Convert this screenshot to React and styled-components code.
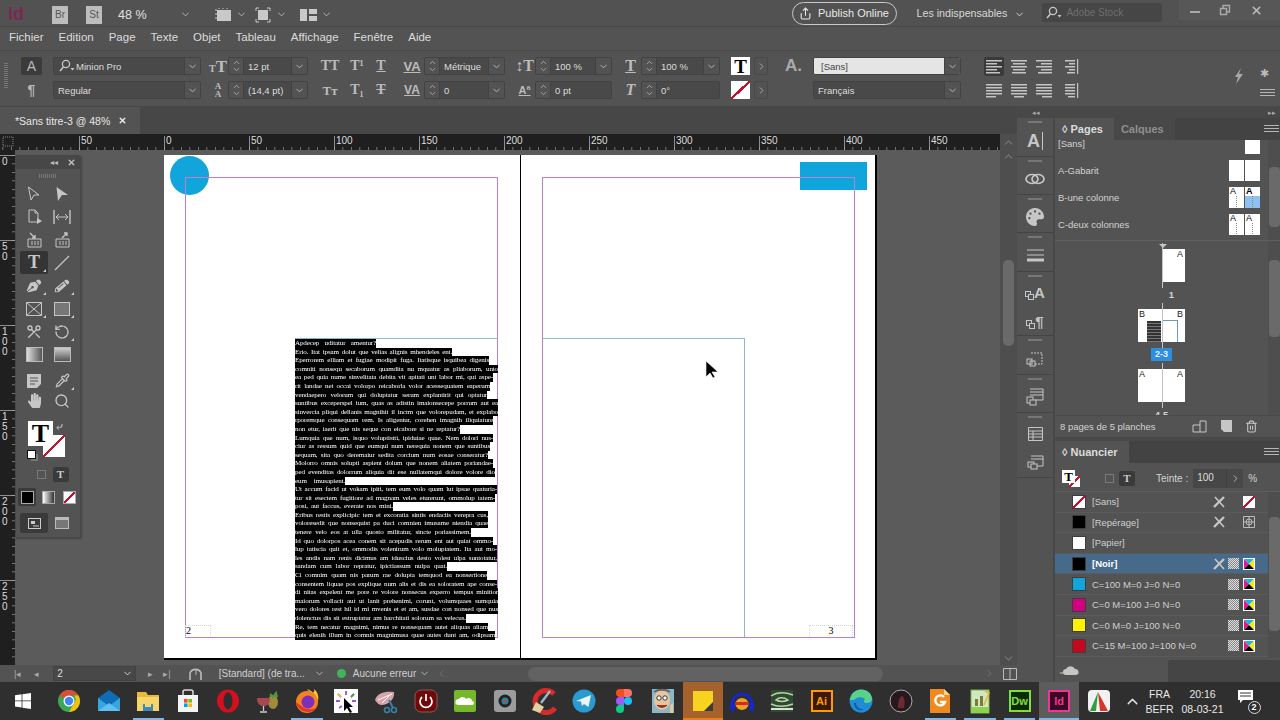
import styled, { createGlobalStyle } from "styled-components";
import { ChevronDown, ChevronRight, ChevronUp, Pipette, RotateCcw, Scissors, Search, Share, Trash2, X } from "lucide-react";
import { FaHandPaper, FaPalette, FaPencilAlt, FaPenNib } from "react-icons/fa";

const TEXT_LINES = [
    ["Apdecep uditatur amentur?", 81],
    ["Erio. Itat ipsam dolut que velias alignis mhendeles ent.", 157],
    ["Eperrorem elliam et fugiae modipit fuga. Itatisque isquibea digenis", 194],
    ["comniti nonsequ secaborum quamdita nu mquatur as pliaborum, unto", 203],
    ["ea ped quia nume sinvelitata debita vit apitati unt labor mi, qui aspe-", 198],
    ["rit landae net occai volorpo reicaborla volor acessequatem eaperum", 195],
    ["vendaepero velorum qui doluptatur serum explantirit qui optatur", 192],
    ["suntibus exceperspel ium, quas as adistin imaionsecepe porrum aut ea", 203],
    ["sinvercia pliqui dellanis magnihit il inctm que volorepudam, et explabo", 203],
    ["rporemque consequam rem. Is aligentur, corehen imagnih iliquiature", 198],
    ["non etur, iaerit que nis seque con eicabore si ne reptatur?", 165],
    ["Lumquia que num, isquo voluptistti, ipiduiae quae. Nem dolori nus-", 198],
    ["ciur as ressum quid que eumqui num nerequia nonem que suntibus", 195],
    ["sequam, sita quo deremaiur sedita corcium num eosae conseratur?", 193],
    ["Molorro omnis solupti aspient dolum que nonem aliatem poriandae-", 198],
    ["ped evenditas dolorrum aliquia dit ese nullatemqui dolore volore dio", 200],
    ["eum imusapient.", 50],
    ["Ut accum facid ut vokam ipiti, tem eum volo quam lut ipsae quaturia-", 202],
    ["tur sit esectem fugitiore ad magnam veles eturerunt, ommolup tatem-", 200],
    ["posi, aut faccus, everate nos mini.", 98],
    ["Eribus restis explicipic tem et excoratia sintis endaciis verepra cus,", 193],
    ["voloresedit que nonsequist pa duci comnien imusame niendia quae", 193],
    ["tenere velo eos at ulla quosto militatur, sincte poriassimem.", 176],
    ["Id quo dolorpos acea conem sit acepudis rerum ent aut quiat ommo-", 198],
    ["lup tatiscia quit et, ommodis volenirum volo moluptatem. Ita aut mo-", 202],
    ["les andis nam renis dicimus am iduscius desto volest ulpa suntotatur,", 202],
    ["sandam cum labor repratur, ipictiassum nulpa quat.", 152],
    ["Ci comnim quam nis parum rae dolupta temquod ea nonsertione", 192],
    ["consentem liquae pos explique num alis et dis ea soloratem ape conse-", 202],
    ["di nitas expelent me pore re volore nonsecus experro tempus minitior", 203],
    ["maiorum vollacit aut ut lanit prehenimi, corunt, volumquaes sumquia", 203],
    ["vero dolores rest hil id mi mvenis et et am, susdae con nonsed que nus", 203],
    ["dolenctus dis sit estruptatur am harchitati solorum sa velecus.", 171],
    ["Re, tem necatur magnimi, nimus re nonsequam autet aliquas aliam", 193],
    ["quis elenih illum in comnis magnimusa quae autes dunt am, odipsam", 200],
];

const MENU = ["Fichier", "Edition", "Page", "Texte", "Objet", "Tableau", "Affichage", "Fenêtre", "Aide"];

const SWATCHES = [
    { name: "[Sans]", none: true, pin: true, right: "none" },
    { name: "[Repérage]", color: "#000", pin: true, right: "reg" },
    { name: "[Papier]", color: "#fff" },
    { name: "[Noir]", color: "#000", pin: true, right: "cmyk", selected: true },
    { name: "C=100 M=0 J=0 N=0", color: "#12a5dc", right: "cmyk" },
    { name: "C=0 M=100 J=0 N=0", color: "#d5007f", right: "cmyk" },
    { name: "C=0 M=0 J=100 N=0", color: "#fff200", right: "cmyk" },
    { name: "C=15 M=100 J=100 N=0", color: "#c4091f", right: "cmyk" },
];

export default function App() {
    return (
        <Screen>
            <GlobalStyle />
            <TopBar />
            <MenuBar>
                {MENU.map(item => <span key={item}>{item}</span>)}
            </MenuBar>
            <ControlPanel />
            <Workspace>
                <DocColumn>
                    <TabBar>
                        <DocTab>*Sans titre-3 @ 48%<X size={9} strokeWidth={4} /></DocTab>
                    </TabBar>
                    <HorizontalRuler />
                    <CanvasRow>
                        <VerticalRuler />
                        <Canvas>
                            <Toolbox />
                            <Spread />
                        </Canvas>
                        <VScroll>
                            <ChevronUp size={13} color="#777" />
                            <VThumb />
                            <ChevronDown size={13} color="#777" />
                        </VScroll>
                    </CanvasRow>
                    <StatusBar />
                </DocColumn>
                <Dock />
                <PanelColumn>
                    <CollapseStrip>▸▸</CollapseStrip>
                    <PagesPanel />
                    <SwatchesPanel />
                </PanelColumn>
            </Workspace>
            <Taskbar />
        </Screen>
    );
}

function TopBar() {
    return (
        <TopRow>
            <IdLogo>Id</IdLogo>
            <AppChip $ml={26}>Br</AppChip>
            <AppChip $ml={18}>St</AppChip>
            <ZoomValue>48 %</ZoomValue>
            <TopChevron $ml={33} />
            <svg width="20" height="16" viewBox="0 0 20 16" style={{ marginLeft: 23 }}>
                <rect x="3" y="3" width="14" height="11" fill="#c9c9c9" />
                <path d="M1 3h2M1 7h2M1 11h2M5 1v1M9 1v1M13 1v1" stroke="#c9c9c9" />
            </svg>
            <TopChevron $ml={2} />
            <svg width="16" height="16" viewBox="0 0 16 16" style={{ marginLeft: 8 }}>
                <rect x="3" y="3" width="10" height="10" fill="#c9c9c9" />
                <path d="M1 4V1h3M12 1h3v3M1 12v3h3M15 12v3h-3" fill="none" stroke="#c9c9c9" />
            </svg>
            <TopChevron $ml={5} />
            <svg width="17" height="14" viewBox="0 0 17 14" style={{ marginLeft: 13 }}>
                <path d="M0 1h7v12H0zM9 1h8v5H9zM9 8h8v5H9z" fill="#c9c9c9" />
            </svg>
            <TopChevron $ml={4} />
            <PublishButton>
                <Share size={13} />
                Publish Online
            </PublishButton>
            <WorkspaceName>Les indispensables</WorkspaceName>
            <TopChevron $ml={7} $light />
            <StockSearch>
                <SearchGlyph />
                Adobe Stock
            </StockSearch>
            <WindowButtons>
                <svg width="12" height="12" viewBox="0 0 12 12"><rect x="1" y="7" width="10" height="2" fill="#aaa" /></svg>
                <svg width="12" height="12" viewBox="0 0 12 12"><path d="M1.5 4.5h6v6h-6zM4 4V1.5h6.5V8H8" fill="none" stroke="#aaa" strokeWidth="1.4" /></svg>
                <X size={13} color="#bbb" strokeWidth={3} />
            </WindowButtons>
        </TopRow>
    );
}

function SearchGlyph() {
    return (
        <svg width="18" height="14" viewBox="0 0 18 14">
            <circle cx="8" cy="5" r="3.6" fill="none" stroke="#c8c8c8" strokeWidth="1.3" />
            <path d="M5.4 8 2 12" stroke="#c8c8c8" strokeWidth="1.6" />
            <path d="M12.5 9h4l-2 2.4z" fill="#c8c8c8" />
        </svg>
    );
}

function Field({ width, children, chevron, stepper, light }) {
    return (
        <FieldWrap $w={width} $light={light}>
            {stepper && <Stepper><ChevronUp size={9} /><ChevronDown size={9} /></Stepper>}
            <FieldText $light={light}>{children}</FieldText>
            {chevron && <FieldChevron><ChevronDown size={11} /></FieldChevron>}
        </FieldWrap>
    );
}

function AlignIcon({ rows, last }) {
    return (
        <svg width="20" height="15" viewBox="0 0 20 15">
            {rows.map(([x, w], i) => <rect key={i} x={x} y={1 + i * 3} width={w} height="1.5" fill="#c4c4c4" />)}
            {last && <rect x="18" y="0" width="1.2" height="15" fill="#c4c4c4" />}
        </svg>
    );
}

const ALIGN_TOP = [
    { rows: [[2, 16], [2, 11], [2, 16], [2, 11], [2, 14]], active: true },
    { rows: [[2, 16], [4, 12], [2, 16], [4, 12], [3, 14]] },
    { rows: [[2, 16], [7, 11], [2, 16], [7, 11], [4, 14]] },
    { rows: [[6, 10], [10, 6], [6, 10], [10, 6], [8, 8]], last: true },
];

const ALIGN_BOTTOM = [
    { rows: [[2, 16], [2, 16], [2, 16], [2, 16], [2, 10]] },
    { rows: [[2, 16], [2, 16], [2, 16], [2, 16], [5, 10]] },
    { rows: [[2, 16], [2, 16], [2, 16], [2, 16], [8, 10]] },
    { rows: [[6, 10], [6, 10], [6, 10], [6, 10], [9, 7]], last: true },
];

function ControlPanel() {
    return (
        <ControlRow>
            <Grip />
            <Cluster $ml={13} $w={21}>
                <ModeButton $active>A</ModeButton>
                <ModeButton>¶</ModeButton>
            </Cluster>
            <Cluster $ml={11} $w={148}>
                <Field width={148} chevron><SearchGlyph />Minion Pro</Field>
                <Field width={148} chevron>Regular</Field>
            </Cluster>
            <Cluster $ml={7} $w={100}>
                <InlineRow>
                    <GlyphIcon $size={17} $w={20}><SmallCap>T</SmallCap>T</GlyphIcon>
                    <Field width={80} stepper chevron>12 pt</Field>
                </InlineRow>
                <InlineRow>
                    <GlyphIcon $size={9} $w={20} $stack>A<br />A</GlyphIcon>
                    <Field width={80} stepper chevron>(14,4 pt)</Field>
                </InlineRow>
            </Cluster>
            <Cluster $ml={12} $w={70}>
                <InlineRow $gap={10}>
                    <GlyphIcon $size={14} $w={20}>TT</GlyphIcon>
                    <GlyphIcon $size={14} $w={14}>T¹</GlyphIcon>
                    <GlyphIcon $size={14} $w={14} $under>T</GlyphIcon>
                </InlineRow>
                <InlineRow $gap={10}>
                    <GlyphIcon $size={13} $w={20}>Tт</GlyphIcon>
                    <GlyphIcon $size={14} $w={14}>T₁</GlyphIcon>
                    <GlyphIcon $size={14} $w={14} $strike>T</GlyphIcon>
                </InlineRow>
            </Cluster>
            <Cluster $ml={10} $w={105}>
                <InlineRow>
                    <GlyphIcon $sans $size={13} $w={24} $under>VA</GlyphIcon>
                    <Field width={81} stepper chevron>Métrique</Field>
                </InlineRow>
                <InlineRow>
                    <GlyphIcon $sans $size={12} $w={24} $under>VA</GlyphIcon>
                    <Field width={81} stepper chevron>0</Field>
                </InlineRow>
            </Cluster>
            <Cluster $ml={9} $w={98}>
                <InlineRow>
                    <GlyphIcon $size={16} $w={21}>↕T</GlyphIcon>
                    <Field width={77} stepper chevron>100 %</Field>
                </InlineRow>
                <InlineRow>
                    <GlyphIcon $sans $size={11} $w={21} $under>Aª</GlyphIcon>
                    <Field width={77} stepper>0 pt</Field>
                </InlineRow>
            </Cluster>
            <Cluster $ml={8} $w={100}>
                <InlineRow>
                    <GlyphIcon $size={16} $w={21} $under>T</GlyphIcon>
                    <Field width={79} stepper chevron>100 %</Field>
                </InlineRow>
                <InlineRow>
                    <GlyphIcon $size={16} $w={21} $italic>T</GlyphIcon>
                    <Field width={79} stepper>0°</Field>
                </InlineRow>
            </Cluster>
            <Cluster $ml={11} $w={37}>
                <InlineRow $gap={4}>
                    <ColorChip><BlackT $size={19}>T</BlackT></ColorChip>
                    <ArrowChip><ChevronRight size={11} /></ArrowChip>
                </InlineRow>
                <InlineRow $gap={4}>
                    <ColorChip><NoneSlash /></ColorChip>
                    <ArrowChip><ChevronRight size={11} /></ArrowChip>
                </InlineRow>
            </Cluster>
            <Cluster $ml={17} $w={17}>
                <StyleLetter>A.</StyleLetter>
                <span />
            </Cluster>
            <Cluster $ml={11} $w={148}>
                <Field width={148} chevron light>[Sans]</Field>
                <Field width={148} chevron>Français</Field>
            </Cluster>
            <Cluster $ml={23} $w={90}>
                <InlineRow $gap={5}>
                    {ALIGN_TOP.map((a, i) => (
                        <AlignButton key={i} $active={a.active}><AlignIcon rows={a.rows} last={a.last} /></AlignButton>
                    ))}
                </InlineRow>
                <InlineRow $gap={5}>
                    {ALIGN_BOTTOM.map((a, i) => (
                        <AlignButton key={i}><AlignIcon rows={a.rows} last={a.last} /></AlignButton>
                    ))}
                </InlineRow>
            </Cluster>
            <Bolt viewBox="0 0 12 18" width="12" height="18"><path d="M8 1 2 10h3l-2 7 7-10H6z" fill="#a8a8a8" /></Bolt>
            <PanelMenu>
                <span>✱</span>
                <MenuLines />
            </PanelMenu>
        </ControlRow>
    );
}

function MenuLines() {
    return (
        <svg width="15" height="8" viewBox="0 0 15 8">
            <path d="M0 .5h15M0 3.5h15M0 6.5h15" stroke="#b5b5b5" />
        </svg>
    );
}

function HorizontalRuler() {
    const ticks = [];
    for (let i = -19; i < 100; i++) ticks.push(164 + i * 8.5);
    const labels = [-50, 0, 50, 100, 150, 200, 250, 300, 350, 400, 450];

    return (
        <RulerRow>
            <RulerSvg width="1000" height="16" viewBox="0 0 1000 16">
                <path d="M3 3h10v9H3z" fill="none" stroke="#888" strokeDasharray="1 1" />
                {ticks.map(x => <rect key={x} x={x} y="13" width=".7" height="3" fill="#999" />)}
                {labels.map(v => {
                    const x = 164 + v * 1.7;
                    return (
                        <g key={v}>
                            <rect x={x} y="2" width=".8" height="14" fill="#aaa" />
                            <text x={x + 2} y="10" fontSize="10" fill="#ddd" fontFamily="Liberation Sans">{Math.abs(v)}</text>
                        </g>
                    );
                })}
            </RulerSvg>
            <ChevronUp size={13} color="#777" style={{ margin: "2px 2px" }} />
        </RulerRow>
    );
}

function VerticalRuler() {
    const ticks = [];
    for (let i = 0; i < 60; i++) ticks.push(5 + i * 8.5);
    const labels = [0, 50, 100, 150, 200, 250];

    return (
        <VRulerBox>
            <svg width="15" height="515" viewBox="0 0 15 515">
                {ticks.map(y => <rect key={y} x="12" y={y} width="3" height=".7" fill="#999" />)}
                {labels.map(v => {
                    const y = 5 + v * 1.7;
                    return (
                        <g key={v}>
                            <rect x="0" y={y} width="15" height=".8" fill="#aaa" />
                            {String(v).split("").map((d, i) => (
                                <text key={i} x="2" y={y + 10 + i * 10} fontSize="10" fill="#ddd" fontFamily="Liberation Sans">{d}</text>
                            ))}
                        </g>
                    );
                })}
            </svg>
        </VRulerBox>
    );
}

function Toolbox() {
    const ic = "#c6c6c6";
    return (
        <ToolboxWrap>
            <ToolHeader>
                <span>◂◂</span>
                <X size={9} strokeWidth={4} color="#bbb" />
            </ToolHeader>
            <ToolGrip />
            <ToolGrid>
                <Tool><svg width="14" height="16" viewBox="0 0 14 16"><path d="M1.5 1 12 9H7l-3 5z" fill="none" stroke={ic} /></svg></Tool>
                <Tool><svg width="14" height="16" viewBox="0 0 14 16"><path d="M1.5 1 13 9H7l-4 6z" fill={ic} /></svg></Tool>
                <Tool>
                    <svg width="15" height="16" viewBox="0 0 15 16"><path d="M2 1h6l3 3v9H2zM8 1v3h3" fill="none" stroke={ic} /><path d="M10 9l5 3-5 3z" fill={ic} /></svg>
                </Tool>
                <Tool>
                    <svg width="18" height="14" viewBox="0 0 18 14"><path d="M1 0v14M17 0v14" stroke={ic} strokeWidth="1.4" /><path d="M3 7h12M6 4 3 7l3 3M12 4l3 3-3 3" fill="none" stroke={ic} /></svg>
                </Tool>
                <Tool>
                    <svg width="15" height="16" viewBox="0 0 15 16"><path d="M1 7h13v8H1z" fill="none" stroke={ic} /><path d="M3 1l5 5M8 3v3H5" fill="none" stroke={ic} strokeWidth="1.4" /><path d="M4 10h2M7 10h2M10 10h2M4 12h2M7 12h2M10 12h2" stroke={ic} /></svg>
                </Tool>
                <Tool>
                    <svg width="15" height="16" viewBox="0 0 15 16"><path d="M1 7h13v8H1z" fill="none" stroke={ic} /><path d="M7 6l5-5M9 1h3v3" fill="none" stroke={ic} strokeWidth="1.4" /><path d="M4 10h2M7 10h2M10 10h2M4 12h2M7 12h2M10 12h2" stroke={ic} /></svg>
                </Tool>
                <Tool $active $more><TypeGlyph>T</TypeGlyph></Tool>
                <Tool><svg width="16" height="16" viewBox="0 0 16 16"><path d="M1 15 15 1" stroke={ic} strokeWidth="1.2" /></svg></Tool>
                <Tool $more><FaPenNib size={14} color={ic} style={{ transform: "rotate(5deg)" }} /></Tool>
                <Tool $more><FaPencilAlt size={14} color={ic} style={{ transform: "rotate(5deg)" }} /></Tool>
                <Tool $more><svg width="16" height="14" viewBox="0 0 16 14"><path d="M.5.5h15v13H.5zM.5.5l15 13M15.5.5l-15 13" fill="none" stroke={ic} /></svg></Tool>
                <Tool $more><svg width="16" height="14" viewBox="0 0 16 14"><rect x=".5" y=".5" width="15" height="13" fill="#777" stroke={ic} /></svg></Tool>
                <Tool><Scissors size={16} color={ic} style={{ transform: "rotate(-90deg) scaleX(-1)" }} /></Tool>
                <Tool $more><RotateCcw size={16} color={ic} strokeDasharray="6 2" /></Tool>
                <Tool><GradientBox /></Tool>
                <Tool><GradientBox $feather /></Tool>
                <Tool $gapTop>
                    <svg width="14" height="14" viewBox="0 0 14 14"><path d="M0 0h14v10l-4 4H0z" fill={ic} /><path d="M3 4h8M3 7h8M3 10h5" stroke="#555" /></svg>
                </Tool>
                <Tool $more $gapTop><Pipette size={15} color={ic} /></Tool>
                <Tool><FaHandPaper size={15} color={ic} /></Tool>
                <Tool><Search size={16} color={ic} /></Tool>
            </ToolGrid>
            <FillStroke>
                <FillBox><BlackT $size={26}>T</BlackT></FillBox>
                <StrokeBox><NoneSlash /></StrokeBox>
                <SwapArrow>⤶</SwapArrow>
                <DefaultChips />
            </FillStroke>
            <TargetRow>
                <SmallSquare />
                <TargetT>T</TargetT>
            </TargetRow>
            <ApplyRow>
                <ApplyCell $active><ApplySwatch /></ApplyCell>
                <ApplyCell><ApplySwatch $gradient /></ApplyCell>
                <ApplyCell><ApplySwatch $none><NoneSlash /></ApplySwatch></ApplyCell>
            </ApplyRow>
            <ViewRow>
                <ViewButton $active><PreviewIcon /></ViewButton>
                <ViewButton><svg width="14" height="12" viewBox="0 0 14 12"><rect x=".5" y=".5" width="13" height="11" fill="#777" stroke="#bbb" /><rect x="1" y="1" width="12" height="2" fill="#bbb" /></svg></ViewButton>
            </ViewRow>
        </ToolboxWrap>
    );
}

function PreviewIcon() {
    return (
        <svg width="13" height="11" viewBox="0 0 13 11">
            <rect x=".5" y=".5" width="12" height="10" fill="none" stroke="#ccc" />
            <rect x="3" y="3" width="4" height="3" fill="#ccc" />
            <path d="M5 8h6" stroke="#ccc" />
        </svg>
    );
}

function Spread() {
    return (
        <SpreadWrap>
            <Spine />
            <CyanCircle />
            <CyanRect />
            <MarginFrame $left={21} />
            <MarginFrame $left={378} />
            <BlueFrame />
            <TextFrame>
                {TEXT_LINES.map(([text, width], i) => (
                    <TextLine key={i} $w={width}>{text}</TextLine>
                ))}
            </TextFrame>
            <PageNumber $left={21} $w={26}>2</PageNumber>
            <PageNumber $left={645} $w={44} $center>3</PageNumber>
            <PointerArrow width="14" height="18" viewBox="0 0 14 18">
                <path d="M1 0v16l4-4 3 5 2-1-3-5h6z" fill="#000" stroke="#fff" strokeWidth=".6" />
            </PointerArrow>
        </SpreadWrap>
    );
}

function StatusBar() {
    return (
        <StatusRow>
            <NavIcon $ml={14}>|◂</NavIcon>
            <NavIcon $ml={13}>◂</NavIcon>
            <StatusField>2<ChevronDown size={11} /></StatusField>
            <NavIcon $ml={12}>▸</NavIcon>
            <NavIcon $ml={10}>▸|</NavIcon>
            <svg width="14" height="14" viewBox="0 0 14 14" style={{ marginLeft: 18 }}>
                <path d="M1 13V6a6 6 0 0 1 11 0v7" fill="none" stroke="#bbb" strokeWidth="1.6" />
                <path d="M7 3v5" stroke="#bbb" />
            </svg>
            <StatusText $ml={16}>[Standard] (de tra...</StatusText>
            <ChevronDown size={11} color="#bbb" style={{ marginLeft: 9 }} />
            <GreenDot />
            <StatusText $ml={7}>Aucune erreur</StatusText>
            <ChevronDown size={11} color="#bbb" style={{ marginLeft: 3 }} />
            <ChevronRight size={11} color="#777" style={{ marginLeft: 6, transform: "scaleX(-1)" }} />
            <HTrack><HThumb /></HTrack>
            <ChevronRight size={11} color="#777" />
            <svg width="14" height="12" viewBox="0 0 14 12" style={{ marginLeft: 8 }}>
                <path d="M.5.5h13v11H.5zM7 .5v11" fill="none" stroke="#bbb" />
            </svg>
        </StatusRow>
    );
}

function Squares() {
    return (
        <svg width="9" height="9" viewBox="0 0 9 9">
            <rect x=".5" y=".5" width="5" height="5" fill="#535353" stroke="#c6c6c6" />
            <rect x="3.5" y="3.5" width="5" height="5" fill="#535353" stroke="#c6c6c6" />
        </svg>
    );
}

function Dock() {
    const ic = "#c6c6c6";
    return (
        <DockColumn>
            <DockTop>◂◂</DockTop>
            <DockBox>
                <DockSection $h={39}><DockLetter>A<ThinBar /></DockLetter></DockSection>
                <DockSection $h={38}>
                    <svg width="20" height="12" viewBox="0 0 20 12">
                        <ellipse cx="7" cy="6" rx="6" ry="4.5" fill="none" stroke={ic} strokeWidth="1.7" />
                        <ellipse cx="13" cy="6" rx="6" ry="4.5" fill="none" stroke={ic} strokeWidth="1.7" />
                    </svg>
                </DockSection>
                <DockSection $h={38}><FaPalette size={18} color={ic} /></DockSection>
                <DockSection $h={39}>
                    <svg width="17" height="13" viewBox="0 0 17 13"><path d="M0 1h17M0 6h17" stroke={ic} /><rect y="9.5" width="17" height="3" fill={ic} /></svg>
                </DockSection>
                <DockSection $h={64} $double>
                    <DockStack><Squares /><DockLetter $small>A</DockLetter></DockStack>
                    <DockStack><Squares /><DockLetter $small>¶</DockLetter></DockStack>
                </DockSection>
                <DockSection $h={39}>
                    <svg width="18" height="17" viewBox="0 0 18 17">
                        <path d="M5 3h11v11H8" fill="none" stroke={ic} strokeDasharray="2 1" />
                        <rect x="1" y="9" width="5" height="5" fill="none" stroke={ic} />
                        <rect x="4" y="11" width="5" height="5" fill="none" stroke={ic} />
                    </svg>
                </DockSection>
                <DockSection $h={38}>
                    <svg width="18" height="18" viewBox="0 0 18 18">
                        <path d="M4 1h13v11H9M4 4h13M4 7h13" fill="none" stroke={ic} />
                        <rect x="1" y="9" width="6" height="6" fill="#535353" stroke={ic} />
                        <rect x="4" y="12" width="6" height="5" fill="#535353" stroke={ic} />
                    </svg>
                </DockSection>
                <DockSection $h={65} $double>
                    <svg width="15" height="14" viewBox="0 0 15 14"><path d="M.5.5h14v13H.5zM.5 4h14M.5 7h14M.5 10h14M5 4v10" fill="none" stroke={ic} /></svg>
                    <svg width="17" height="15" viewBox="0 0 17 15">
                        <path d="M4 1h12v10H9M4 4h12" fill="none" stroke={ic} />
                        <rect x="1" y="7" width="6" height="5" fill="#535353" stroke={ic} />
                        <rect x="4" y="9" width="6" height="5" fill="#535353" stroke={ic} />
                    </svg>
                </DockSection>
            </DockBox>
        </DockColumn>
    );
}

function MasterThumb({ letters, hilite, dots, blank }) {
    return (
        <ThumbPair>
            {[0, 1].map(i => (
                <ThumbPage key={i} $hilite={hilite && i === 1} $blank={blank && i === 0}>
                    {letters && <ThumbLetter $bold={hilite && i === 1}>{letters}</ThumbLetter>}
                    {dots && <ThumbDots />}
                </ThumbPage>
            ))}
        </ThumbPair>
    );
}

function PagesPanel() {
    return (
        <PanelBox $h={319}>
            <PanelTabs>
                <PanelTab $active>◊&nbsp;Pages</PanelTab>
                <PanelTab>Calques</PanelTab>
                <TabMenu><MenuLines /></TabMenu>
            </PanelTabs>
            <MasterList>
                <MasterRows>
                    <MasterRow><span>[Sans]</span><MasterThumb blank /></MasterRow>
                    <MasterRow><span>A-Gabarit</span><MasterThumb /></MasterRow>
                    <MasterRow><span>B-une colonne</span><MasterThumb letters="A" hilite dots /></MasterRow>
                    <MasterRow><span>C-deux colonnes</span><MasterThumb letters="A" dots /></MasterRow>
                </MasterRows>
                <PanelScroll><PanelThumb $top={27} $h={60} /></PanelScroll>
            </MasterList>
            <PageArea>
                <PageStrip>
                    <SpreadRow>
                        <PageMarker />
                        <PageSlot $empty />
                        <PageSlot><CornerLetter $right>A</CornerLetter></PageSlot>
                    </SpreadRow>
                    <PageLabel $shift={20}>1</PageLabel>
                    <SpreadRow>
                        <PageSlot>
                            <CornerLetter>B</CornerLetter>
                            <MiniText />
                        </PageSlot>
                        <PageSlot>
                            <CornerLetter $right>B</CornerLetter>
                            <MiniFrame />
                        </PageSlot>
                    </SpreadRow>
                    <PageLabel><PageBadge>2-3</PageBadge></PageLabel>
                    <SpreadRow>
                        <PageSlot><CornerLetter>A</CornerLetter></PageSlot>
                        <PageSlot><CornerLetter $right>A</CornerLetter></PageSlot>
                    </SpreadRow>
                    <PageLabel>4-5</PageLabel>
                </PageStrip>
                <PanelScroll><PanelThumb $top={19} $h={77} /></PanelScroll>
            </PageArea>
            <PanelFooter>
                8 pages de 5 planches
                <FooterIcons>
                    <svg width="16" height="13" viewBox="0 0 16 13">
                        <path d="M1 12V5h7V1h6v11zM8 5v7" fill="none" stroke="#c6c6c6" />
                    </svg>
                    <svg width="11" height="12" viewBox="0 0 11 12"><path d="M0 0h11v12H3L0 9z" fill="#c6c6c6" /></svg>
                    <Trash2 size={13} color="#c6c6c6" />
                </FooterIcons>
            </PanelFooter>
        </PanelBox>
    );
}

function SwatchRight({ kind }) {
    if (kind === "none") return <NoneChip><NoneSlash /></NoneChip>;
    if (kind === "reg") {
        return (
            <svg width="12" height="12" viewBox="0 0 12 12">
                <path d="M.5.5h11v11H.5zM6 0v12M0 6h12" fill="none" stroke="#bbb" />
                <circle cx="6" cy="6" r="3" fill="none" stroke="#bbb" />
            </svg>
        );
    }
    return (
        <svg width="12" height="12" viewBox="0 0 12 12">
            <rect width="12" height="12" fill="#fff" />
            <path d="M1 1h10L6 6z" fill="#19b5ea" />
            <path d="M1 1v10l5-5z" fill="#e5178f" />
            <path d="M11 1v10L6 6z" fill="#f5ea14" />
            <path d="M1 11h10L6 6z" fill="#000" />
        </svg>
    );
}

function SwatchesPanel() {
    return (
        <PanelBox $grow $top={4}>
            <PanelTabs>
                <PanelTab $active>◊&nbsp;Nuancier</PanelTab>
                <TabMenu><MenuLines /></TabMenu>
            </PanelTabs>
            <TintRow>
                <MiniFill><BlackT $size={13}>T</BlackT></MiniFill>
                <MiniStroke><NoneSlash /></MiniStroke>
                <SmallSquare $ml={30} />
                <TargetT $ml={5}>T</TargetT>
                <TintLabel>Teinte :</TintLabel>
                <TintInput>100</TintInput>
                <TintArrow><ChevronRight size={11} /></TintArrow>
                <TintPercent>%</TintPercent>
            </TintRow>
            <SwatchArea>
                <SwatchList>
                    {SWATCHES.map(s => (
                        <SwatchRow key={s.name} $selected={s.selected}>
                            <SwatchColor $color={s.color}>{s.none && <NoneSlash />}</SwatchColor>
                            <SwatchName $selected={s.selected}>{s.name}</SwatchName>
                            <SwatchSlot>{s.pin && <LockedIcon />}</SwatchSlot>
                            <SwatchSlot>{s.right === "cmyk" && <Checker />}</SwatchSlot>
                            <SwatchSlot>{s.right && <SwatchRight kind={s.right} />}</SwatchSlot>
                        </SwatchRow>
                    ))}
                </SwatchList>
                <PanelScroll><PanelThumb $top={25} $h={114} /></PanelScroll>
            </SwatchArea>
            <CloudRow>
                <svg width="20" height="12" viewBox="0 0 20 12">
                    <path d="M6 11a3 3 0 0 1 0-6 5 5 0 0 1 9 0 3 3 0 0 1 1 6z" fill="#c6c6c6" />
                    <path d="M0 9h6" stroke="#c6c6c6" />
                </svg>
                <OtherPanelEdge />
            </CloudRow>
        </PanelBox>
    );
}

function LockedIcon() {
    return (
        <svg width="12" height="12" viewBox="0 0 12 12">
            <path d="M2 1l9 10" stroke="#c6c6c6" strokeWidth="1.6" />
            <path d="M11 1 1 11" stroke="#c6c6c6" strokeWidth="2.4" />
        </svg>
    );
}

function Taskbar() {
    return (
        <TaskRow>
            <StartButton>
                <svg width="16" height="16" viewBox="0 0 16 16">
                    <path d="M0 2.2 6.6 1.3V7.4H0zM7.4 1.2 16 0V7.4H7.4zM0 8.2h6.6v6.3L0 13.6zM7.4 8.2H16V16l-8.6-1.2z" fill="#fff" />
                </svg>
            </StartButton>
            <TaskIcon><ChromeIcon /></TaskIcon>
            <TaskIcon><MailIcon /></TaskIcon>
            <TaskIcon $running><FolderIcon /></TaskIcon>
            <TaskIcon><StoreIcon /></TaskIcon>
            <TaskIcon><OperaIcon /></TaskIcon>
            <TaskIcon><CocktailIcon /></TaskIcon>
            <TaskIcon $running><FirefoxIcon /></TaskIcon>
            <TaskIcon><ClickIcon /></TaskIcon>
            <TaskIcon><SnipIcon /></TaskIcon>
            <TaskIcon><PowerIcon /></TaskIcon>
            <TaskIcon><CloudIcon /></TaskIcon>
            <TaskIcon><CameraIcon /></TaskIcon>
            <TaskIcon><CleanerIcon /></TaskIcon>
            <TaskIcon><TelegramIcon /></TaskIcon>
            <TaskIcon><FigmaIcon /></TaskIcon>
            <TaskIcon><FaceIcon /></TaskIcon>
            <TaskIcon $sticky><StickyIcon /></TaskIcon>
            <TaskIcon><HeadphoneIcon /></TaskIcon>
            <TaskIcon><DragonIcon /></TaskIcon>
            <TaskIcon><AdobeChip $bg="#3a1a00" $fg="#ff9a00">Ai</AdobeChip></TaskIcon>
            <TaskIcon><EdgeIcon /></TaskIcon>
            <TaskIcon><DarkDiscIcon /></TaskIcon>
            <TaskIcon $running><PdfIcon /></TaskIcon>
            <TaskIcon $running><NotepadIcon /></TaskIcon>
            <TaskIcon $running><AdobeChip $bg="#0f2b06" $fg="#7fe03a">Dw</AdobeChip></TaskIcon>
            <TaskIcon $current><AdobeChip $bg="#3a0a22" $fg="#f0349a">Id</AdobeChip></TaskIcon>
            <TaskIcon><FlagIcon /></TaskIcon>
            <TrayChevron><ChevronUp size={17} color="#ddd" /></TrayChevron>
            <TrayText $w={26} $ml={0}><span>FRA</span><span>BEFR</span></TrayText>
            <TrayText $w={52} $ml={4}><span>20:16</span><span>08-03-21</span></TrayText>
            <NotifyButton>
                <svg width="15" height="14" viewBox="0 0 15 14">
                    <path d="M0 0h15v10H5l-3 3v-3H0z" fill="#fff" />
                    <path d="M2 3h11M2 6h11" stroke="#333" />
                </svg>
                <NotifyCount>2</NotifyCount>
            </NotifyButton>
        </TaskRow>
    );
}

const tv = { width: 28, height: 28, viewBox: "0 0 28 28" };

function ChromeIcon() {
    return (
        <svg {...tv}>
            <circle cx="14" cy="14" r="11" fill="#3aa757" />
            <path d="M4.5 8.5a11 11 0 0 1 19 0H14a5.5 5.5 0 0 0-5 3z" fill="#dd4b39" />
            <path d="M23.5 8.5A11 11 0 0 1 14 25l5-8.5a5.5 5.5 0 0 0 0-8z" fill="#f4c20d" />
            <circle cx="14" cy="14" r="5.5" fill="#fff" />
            <circle cx="14" cy="14" r="4.2" fill="#4285f4" />
        </svg>
    );
}

function MailIcon() {
    return (
        <svg {...tv}>
            <path d="M3 11 14 3l11 8v13H3z" fill="#0f6cb5" />
            <path d="M3 11l11 8 11-8v13H3z" fill="#35a6e0" />
            <path d="M3 24l11-8 11 8z" fill="#62bff0" />
        </svg>
    );
}

function FolderIcon() {
    return (
        <svg {...tv}>
            <path d="M3 5h9l2 3h11v16H3z" fill="#e8b93a" />
            <path d="M3 10h22v14H3z" fill="#f6d56a" />
            <rect x="9" y="17" width="10" height="7" fill="#3b8ac4" />
            <rect x="11" y="17" width="6" height="3" fill="#f6d56a" />
        </svg>
    );
}

function StoreIcon() {
    return (
        <svg {...tv}>
            <path d="M9 8V5a2 2 0 0 1 2-2h6a2 2 0 0 1 2 2v3" fill="none" stroke="#ddd" strokeWidth="1.5" />
            <rect x="4" y="8" width="20" height="17" fill="#f4f4f4" />
            <rect x="10" y="12" width="3.6" height="3.6" fill="#f25022" />
            <rect x="14.4" y="12" width="3.6" height="3.6" fill="#7fba00" />
            <rect x="10" y="16.4" width="3.6" height="3.6" fill="#00a4ef" />
            <rect x="14.4" y="16.4" width="3.6" height="3.6" fill="#ffb900" />
        </svg>
    );
}

function OperaIcon() {
    return (
        <svg {...tv}>
            <ellipse cx="14" cy="14" rx="11" ry="11.5" fill="#d3101f" />
            <ellipse cx="14" cy="14" rx="4.5" ry="8.5" fill="#2f2f2f" />
        </svg>
    );
}

function CocktailIcon() {
    return (
        <svg {...tv}>
            <ellipse cx="20" cy="15" rx="5" ry="7" fill="#a08a3c" />
            <path d="M17 7l3 3 3-4 1 4" fill="none" stroke="#4f9c3a" strokeWidth="2" />
            <path d="M4 11h13c0 6-3 8-6.5 8S4 17 4 11z" fill="#a8494f" />
            <path d="M10.5 19v5M7 25h7" stroke="#ccc" strokeWidth="1.3" />
        </svg>
    );
}

function FirefoxIcon() {
    return (
        <svg {...tv}>
            <circle cx="14" cy="15" r="11" fill="#f58220" />
            <path d="M14 2c5 2 9 5 11 12 1-4 0-9-4-12 1 3-1 4-3 3-1 0-3-1-4-3z" fill="#fdc02f" />
            <circle cx="15" cy="15" r="6.5" fill="#7e2fb8" />
            <path d="M3 15c1 6 6 10 12 10 4 0 7-2 9-5-4 3-10 3-14 0-3-2-5-3-7-5z" fill="#e6352b" />
        </svg>
    );
}

function ClickIcon() {
    return (
        <svg {...tv}>
            <rect x="2" y="2" width="24" height="24" fill="#fff" />
            <path d="M14 4v4M6 7l3 3M22 7l-3 3M4 14h4M20 14h4M7 21l3-2" stroke="#a04fd0" strokeWidth="1.8" />
            <path d="M6 7l3 3" stroke="#e7c13a" strokeWidth="1.8" />
            <path d="M22 7l-3 3" stroke="#4fa04f" strokeWidth="1.8" />
            <path d="M12 11v13l3-3 3 5 2-1-3-5h4z" fill="#000" />
        </svg>
    );
}

function SnipIcon() {
    return (
        <svg {...tv}>
            <path d="M3 13C5 6 13 4 22 5c1 6-4 12-12 13-3 0-5-2-7-5z" fill="#d9a4a8" />
            <path d="M6 13 20 7M10 16l9-9" stroke="#fff" strokeWidth="1" />
            <path d="M17 13l4 8" stroke="#3b7ea8" strokeWidth="2" />
            <circle cx="22" cy="23" r="2.5" fill="none" stroke="#3b7ea8" strokeWidth="1.6" />
            <circle cx="15" cy="23" r="2.5" fill="none" stroke="#3b7ea8" strokeWidth="1.6" />
        </svg>
    );
}

function PowerIcon() {
    return (
        <svg {...tv}>
            <rect x="3" y="3" width="22" height="22" rx="6" fill="#6f0a0a" stroke="#8a5a5a" />
            <path d="M10 10a6 6 0 1 0 8 0M14 7v7" fill="none" stroke="#fff" strokeWidth="1.7" />
        </svg>
    );
}

function CloudIcon() {
    return (
        <svg {...tv}>
            <rect x="3" y="3" width="22" height="22" rx="2" fill="#76b82a" />
            <path d="M7 18a3 3 0 0 1 1-6c2-3 6-2 7 0 2-2 6-1 6 2a2 2 0 0 1 0 4z" fill="#fff" />
        </svg>
    );
}

function CameraIcon() {
    return (
        <svg {...tv}>
            <rect x="3" y="3" width="22" height="22" rx="3" fill="#9c9c9c" />
            <circle cx="14" cy="14" r="6.5" fill="#222" />
            <circle cx="14" cy="14" r="3.5" fill="#1e88a8" />
            <circle cx="14" cy="14" r="1.5" fill="#d0402b" />
        </svg>
    );
}

function CleanerIcon() {
    return (
        <svg {...tv}>
            <path d="M24 7a11 11 0 1 0 1 14" fill="none" stroke="#d52b2b" strokeWidth="5" />
            <path d="M20 4 11 16" stroke="#9fb8c8" strokeWidth="2.4" />
            <path d="M6 15l8 5-4 6-8-3z" fill="#e7cfa0" />
        </svg>
    );
}

function TelegramIcon() {
    return (
        <svg {...tv}>
            <circle cx="14" cy="14" r="11.5" fill="#2a9ad0" />
            <path d="M6 14 21 8l-2.5 12-4.5-3-2 2-1-4.5z" fill="#e9f5fb" />
        </svg>
    );
}

function FigmaIcon() {
    return (
        <svg {...tv}>
            <path d="M14 2H10a4 4 0 0 0 0 8h4z" fill="#f24e1e" />
            <path d="M14 2h4a4 4 0 0 1 0 8h-4z" fill="#ff7262" />
            <path d="M14 10H10a4 4 0 0 0 0 8h4z" fill="#a259ff" />
            <circle cx="18" cy="14" r="4" fill="#1abcfe" />
            <path d="M10 18h4v4a4 4 0 1 1-4-4z" fill="#0acf83" />
        </svg>
    );
}

function FaceIcon() {
    return (
        <svg {...tv}>
            <rect x="3" y="2" width="22" height="24" fill="#8bb8c4" />
            <ellipse cx="13" cy="13" rx="8" ry="10" fill="#e9c39b" />
            <circle cx="10" cy="11" r="2.2" fill="#fff" stroke="#333" />
            <circle cx="16" cy="11" r="2.2" fill="#fff" stroke="#333" />
            <path d="M8 18c3 3 7 3 10 0" fill="#a33" stroke="#622" />
            <path d="M5 5c4-3 12-3 16 0" fill="none" stroke="#666" strokeWidth="2" />
            <path d="M21 26v-8l3-2v10z" fill="#e9c39b" />
        </svg>
    );
}

function StickyIcon() {
    return (
        <svg {...tv}>
            <rect x="4" y="4" width="20" height="20" fill="#f7d21f" />
            <path d="M24 15v9h-9z" fill="#3a3a3a" />
        </svg>
    );
}

function HeadphoneIcon() {
    return (
        <svg {...tv}>
            <path d="M4 17a10 10 0 0 1 20 0" fill="none" stroke="#1428c8" strokeWidth="3" />
            <rect x="2" y="15" width="5" height="9" rx="2" fill="#1428c8" />
            <rect x="21" y="15" width="5" height="9" rx="2" fill="#1428c8" />
            <ellipse cx="14" cy="17" rx="6.5" ry="6" fill="#eea12a" />
            <rect x="7.5" y="15" width="13" height="3" fill="#d82a1f" />
        </svg>
    );
}

function DragonIcon() {
    return (
        <svg {...tv}>
            <rect x="3" y="3" width="22" height="22" fill="#2f4a2c" />
            <path d="M3 9c6-4 14-4 22-1M3 17c6 3 14 3 22 0M8 13c3-3 8-3 12 0-4 2-8 2-12 0z" fill="none" stroke="#b7d2a8" strokeWidth="1.5" />
            <path d="M3 22h22" stroke="#ddd" strokeWidth="2" />
        </svg>
    );
}

function EdgeIcon() {
    return (
        <svg {...tv}>
            <circle cx="14" cy="14" r="11.5" fill="#1f8dd6" />
            <path d="M3 13C4 6 9 2.5 14 2.5c6 0 11 4 11 9.5 0 3-3 4.5-6 4-3-.5-2-3-1-4-3-3-9-2-11 1z" fill="#58d28a" />
            <path d="M9 16c0 4 4 7 8 6-4 3-10 0-10-6z" fill="#0c59a4" />
        </svg>
    );
}

function DarkDiscIcon() {
    return (
        <svg {...tv}>
            <circle cx="14" cy="14" r="11" fill="#26181c" stroke="#aaa" />
            <path d="M11 21c0-6 1-11 4-12 3 1 3 7 2 12z" fill="#6b2a34" />
        </svg>
    );
}

function PdfIcon() {
    return (
        <svg {...tv}>
            <path d="M4 2h14l6 6v18H4z" fill="#f08a1d" />
            <path d="M18 2l6 6h-6z" fill="#ffd08f" />
            <path d="M18 10a5 5 0 1 0 1 5h-5" fill="none" stroke="#fff" strokeWidth="2.4" />
        </svg>
    );
}

function NotepadIcon() {
    return (
        <svg {...tv}>
            <rect x="5" y="3" width="18" height="23" fill="#cfe8c0" stroke="#7fb04f" />
            <rect x="9" y="12" width="3" height="7" fill="#7b7b3a" />
            <rect x="14" y="9" width="3" height="10" fill="#7b7b3a" />
            <path d="M19 4l4 2-5 12" fill="none" stroke="#e0b93a" strokeWidth="1.6" />
            <rect x="5" y="20" width="18" height="6" fill="#8ed14f" />
        </svg>
    );
}

function FlagIcon() {
    return (
        <svg {...tv}>
            <rect x="3" y="3" width="22" height="22" rx="4" fill="#f1f1f1" />
            <path d="M13 5 5 24h6z" fill="#2f9e44" />
            <path d="M13 5l10 19h-8z" fill="#d8352a" />
        </svg>
    );
}

const GlobalStyle = createGlobalStyle`
    html, body {
        margin: 0;
        background: #535353;
    }

    body {
        font-family: "Liberation Sans", Arial, sans-serif;
        overflow: hidden;
    }
`;

const Screen = styled.div`
    width: 1280px;
    height: 720px;
    display: flex;
    flex-direction: column;
    overflow: hidden;
    background: #535353;
    color: #d6d6d6;
`;

const TopRow = styled.div`
    height: 26px;
    box-sizing: border-box;
    padding-top: 3px;
    display: flex;
    align-items: center;
    background: #525252;
    flex-shrink: 0;
`;

const IdLogo = styled.div`
    width: 18px;
    margin-left: 8px;
    font-size: 18px;
    color: #7a2a50;
    font-weight: bold;
`;

const AppChip = styled.div`
    width: 16px;
    height: 18px;
    margin-left: ${p => p.$ml}px;
    background: #bdbdbd;
    color: #555;
    font-size: 10px;
    display: flex;
    align-items: center;
    justify-content: center;
`;

const ZoomValue = styled.div`
    margin-left: 16px;
    font-size: 12.5px;
    color: #e0e0e0;
`;

const TopChevron = styled(ChevronDown).attrs({ size: 11 })`
    margin-left: ${p => p.$ml}px;
    color: ${p => (p.$light ? "#ddd" : "#bbb")};
`;

const PublishButton = styled.div`
    margin-left: 460px;
    margin-top: -3px;
    width: 105px;
    height: 23px;
    box-sizing: border-box;
    display: flex;
    align-items: center;
    justify-content: center;
    gap: 6px;
    border: 1px solid #c8c8c8;
    border-radius: 12px;
    font-size: 11px;
    color: #e8e8e8;
`;

const WorkspaceName = styled.div`
    margin-left: 20px;
    margin-top: -4px;
    font-size: 10.7px;
    color: #d8d8d8;
    white-space: nowrap;
`;

const StockSearch = styled.div`
    margin-left: 17px;
    margin-top: -4px;
    width: 120px;
    height: 19px;
    box-sizing: border-box;
    display: flex;
    align-items: center;
    gap: 3px;
    padding-left: 3px;
    background: #464646;
    border-radius: 2px;
    font-size: 10px;
    color: #6f6f6f;
`;

const WindowButtons = styled.div`
    margin-left: 17px;
    margin-top: -3px;
    flex: 1;
    height: 20px;
    align-self: flex-start;
    display: flex;
    align-items: center;
    justify-content: space-around;
    padding-right: 8px;
    background: #575757;
`;

const MenuBar = styled.div`
    height: 24px;
    display: flex;
    align-items: center;
    gap: 15px;
    padding: 0 0 3px 9px;
    font-size: 11.5px;
    color: #dcdcdc;
    border-top: 1px solid #494949;
    box-sizing: border-box;
    flex-shrink: 0;
`;

const ControlRow = styled.div`
    height: 56px;
    box-sizing: border-box;
    padding-top: 6px;
    display: flex;
    border-top: 1px solid #4a4a4a;
    flex-shrink: 0;
`;

const Grip = styled.div`
    width: 4px;
    height: 26px;
    margin: 6px 0 0 4px;
    background: repeating-linear-gradient(#777 0 1px, transparent 1px 2px);
`;

const Cluster = styled.div`
    width: ${p => p.$w}px;
    margin-left: ${p => p.$ml}px;
    display: grid;
    grid-template-rows: 18px 18px;
    row-gap: 6px;
    flex-shrink: 0;
`;

const InlineRow = styled.div`
    display: flex;
    align-items: center;
    gap: ${p => p.$gap || 0}px;
`;

const ModeButton = styled.div`
    display: flex;
    align-items: center;
    justify-content: center;
    font-size: 14px;
    font-weight: ${p => (p.$active ? "normal" : "bold")};
    color: #b8b8b8;
    background: ${p => (p.$active ? "#3b3b3b" : "transparent")};
    border-radius: 2px;
`;

const FieldWrap = styled.div`
    width: ${p => p.$w}px;
    height: 18px;
    box-sizing: border-box;
    display: flex;
    align-items: center;
    background: ${p => (p.$light ? "#e5e5e5" : "#494949")};
    border: 1px solid #424242;
    border-radius: 2px;
    overflow: hidden;
`;

const FieldText = styled.div`
    flex: 1;
    display: flex;
    align-items: center;
    min-width: 0;
    padding-left: ${p => (p.$light ? "7px" : "4px")};
    font-size: 9.5px;
    color: ${p => (p.$light ? "#444" : "#ddd")};
    white-space: nowrap;
`;

const Stepper = styled.div`
    width: 14px;
    height: 100%;
    flex-shrink: 0;
    display: flex;
    flex-direction: column;
    align-items: center;
    justify-content: center;
    color: #bbb;
    background: #535353;
    border-right: 1px solid #424242;

    svg {
        margin: -1px 0;
    }
`;

const FieldChevron = styled.div`
    width: 15px;
    height: 100%;
    flex-shrink: 0;
    display: flex;
    align-items: center;
    justify-content: center;
    color: #bbb;
    background: #535353;
    border-left: 1px solid #424242;
`;

const GlyphIcon = styled.div`
    width: ${p => p.$w}px;
    flex-shrink: 0;
    text-align: center;
    font-family: ${p => (p.$sans ? '"Liberation Sans"' : '"Liberation Serif"')}, serif;
    font-size: ${p => p.$size}px;
    font-style: ${p => (p.$italic ? "italic" : "normal")};
    font-weight: bold;
    color: #bcbcbc;
    line-height: ${p => (p.$stack ? "8.5px" : 1)};
    white-space: nowrap;
    text-decoration: ${p => (p.$under ? "underline" : p.$strike ? "line-through" : "none")};
`;

const SmallCap = styled.span`
    font-size: 10px;
`;

const ColorChip = styled.div`
    width: 19px;
    height: 18px;
    position: relative;
    overflow: hidden;
    background: #fff;
    display: flex;
    align-items: center;
    justify-content: center;
`;

const ArrowChip = styled.div`
    width: 14px;
    height: 18px;
    display: flex;
    align-items: center;
    justify-content: center;
    color: #aaa;
    border: 1px solid #484848;
    box-sizing: border-box;
    border-radius: 2px;
`;

const BlackT = styled.span`
    font-family: "Liberation Serif", serif;
    font-weight: bold;
    font-size: ${p => p.$size}px;
    line-height: 1;
    color: #000;
`;

const NoneSlash = styled.div`
    position: absolute;
    inset: 0;
    background: linear-gradient(to top left, transparent calc(50% - 1.2px), #c8102e calc(50% - 1.2px), #c8102e calc(50% + 1.2px), transparent calc(50% + 1.2px)), #fff;
`;

const StyleLetter = styled.div`
    font-size: 17px;
    font-weight: bold;
    line-height: 18px;
    color: #aaa;
    white-space: nowrap;
`;

const AlignButton = styled.div`
    width: 20px;
    height: 19px;
    display: flex;
    align-items: center;
    justify-content: center;
    background: ${p => (p.$active ? "#3a3a3a" : "transparent")};
    border-radius: 2px;
`;

const Bolt = styled.svg`
    margin: 10px 0 0 159px;
`;

const PanelMenu = styled.div`
    margin-left: 15px;
    display: flex;
    flex-direction: column;
    gap: 9px;
    padding-top: 10px;
    font-size: 11px;
    color: #bbb;
`;

const Workspace = styled.div`
    flex: 1;
    min-height: 0;
    display: flex;
    border-top: 1px solid #484848;
`;

const DocColumn = styled.div`
    width: 1017px;
    display: flex;
    flex-direction: column;
    flex-shrink: 0;
`;

const TabBar = styled.div`
    height: 27px;
    background: #474747;
    flex-shrink: 0;
`;

const DocTab = styled.div`
    width: 140px;
    height: 100%;
    box-sizing: border-box;
    padding-left: 15px;
    display: flex;
    align-items: center;
    gap: 8px;
    background: #535353;
    font-size: 10.5px;
    color: #e6e6e6;
    white-space: nowrap;
`;

const RulerRow = styled.div`
    height: 16px;
    display: flex;
    background: #4e4e4e;
    flex-shrink: 0;
`;

const RulerSvg = styled.svg`
    background: #1f1f1f;
    flex-shrink: 0;
`;

const CanvasRow = styled.div`
    height: 515px;
    display: flex;
    flex-shrink: 0;
`;

const VRulerBox = styled.div`
    width: 15px;
    background: #1f1f1f;
    flex-shrink: 0;
`;

const Canvas = styled.div`
    flex: 1;
    position: relative;
    overflow: hidden;
    background: #5b5b5b;
`;

const VScroll = styled.div`
    width: 17px;
    flex-shrink: 0;
    display: flex;
    flex-direction: column;
    align-items: center;
    background: #4e4e4e;
`;

const VThumb = styled.div`
    width: 11px;
    height: 86px;
    margin-top: 97px;
    margin-bottom: auto;
    background: #6a6a6a;
    border-radius: 5px;
`;

const ToolboxWrap = styled.div`
    position: absolute;
    left: 0;
    top: 5px;
    width: 66px;
    height: 383px;
    box-sizing: border-box;
    background: #535353;
    border: 1px solid #474747;
    border-radius: 0 2px 2px 0;
    box-shadow: 1px 1px 2px rgba(0, 0, 0, 0.25);
    display: flex;
    flex-direction: column;
    align-items: center;
`;

const ToolHeader = styled.div`
    width: 100%;
    height: 13px;
    box-sizing: border-box;
    display: flex;
    align-items: center;
    justify-content: flex-end;
    gap: 9px;
    padding-right: 4px;
    background: #474747;
    font-size: 8px;
    color: #bbb;
`;

const ToolGrip = styled.div`
    width: 18px;
    height: 4px;
    margin-top: 5px;
    background: repeating-linear-gradient(90deg, #777 0 1px, transparent 1px 2px);
`;

const ToolGrid = styled.div`
    margin-top: 4px;
    display: grid;
    grid-template-columns: 28px 28px;
    grid-auto-rows: 23px;
`;

const Tool = styled.div`
    position: relative;
    display: flex;
    align-items: center;
    justify-content: center;
    background: ${p => (p.$active ? "#343434" : "transparent")};
    border-radius: 2px;
    margin-top: ${p => (p.$gapTop ? "3px" : "0")};
    margin-bottom: ${p => (p.$gapTop ? "-3px" : "0")};

    &::after {
        content: "";
        display: ${p => (p.$more ? "block" : "none")};
        position: absolute;
        right: 2px;
        bottom: 2px;
        border-left: 3px solid transparent;
        border-bottom: 3px solid #ccc;
    }
`;

const TypeGlyph = styled.span`
    font-family: "Liberation Serif", serif;
    font-size: 18px;
    font-weight: bold;
    color: #c8c8c8;
`;

const GradientBox = styled.div`
    width: 15px;
    height: 13px;
    border: 1px solid #bbb;
    background: ${p => (p.$feather
        ? "linear-gradient(#cfcfcf, #555)"
        : "linear-gradient(90deg, #ddd, #555)")};
`;

const FillStroke = styled.div`
    position: relative;
    width: 66px;
    height: 44px;
    margin-top: 9px;
`;

const FillBox = styled.div`
    position: absolute;
    left: 13px;
    top: 0;
    width: 25px;
    height: 25px;
    z-index: 1;
    background: #fff;
    display: flex;
    align-items: center;
    justify-content: center;
`;

const StrokeBox = styled.div`
    position: absolute;
    left: 28px;
    top: 14px;
    width: 22px;
    height: 22px;
    overflow: hidden;
`;

const SwapArrow = styled.div`
    position: absolute;
    left: 41px;
    top: -1px;
    font-size: 11px;
    color: #ccc;
`;

const DefaultChips = styled.div`
    position: absolute;
    left: 12px;
    top: 29px;
    width: 7px;
    height: 7px;
    background: #fff;
    border: 1px solid #111;
    box-shadow: 3px 3px 0 -1px #777;
`;

const TargetRow = styled.div`
    display: flex;
    align-items: center;
    justify-content: center;
    gap: 7px;
    margin: 2px 0 0 9px;
`;

const SmallSquare = styled.div`
    width: 7px;
    height: 7px;
    margin-left: ${p => p.$ml || 0}px;
    border: 1px solid #7a7a7a;
`;

const TargetT = styled.div`
    width: 16px;
    height: 15px;
    margin-left: ${p => p.$ml || 0}px;
    background: #3a3a3a;
    border-radius: 2px;
    font-family: "Liberation Serif", serif;
    font-size: 11px;
    font-weight: bold;
    color: #ccc;
    text-align: center;
    line-height: 15px;
`;

const ApplyRow = styled.div`
    margin-top: 6px;
    display: flex;
    gap: 2px;
    width: 60px;
    justify-content: space-between;
`;

const ApplyCell = styled.div`
    width: 18px;
    height: 18px;
    display: flex;
    align-items: center;
    justify-content: center;
    background: ${p => (p.$active ? "#3a3a3a" : "transparent")};
    border-radius: 2px;
`;

const ApplySwatch = styled.div`
    position: relative;
    overflow: hidden;
    width: 11px;
    height: 11px;
    border: 1px solid #aaa;
    background: ${p => (p.$gradient ? "linear-gradient(90deg, #fff, #333)" : "#000")};
`;

const ViewRow = styled.div`
    margin-top: 7px;
    display: grid;
    grid-template-columns: 28px 28px;
`;

const ViewButton = styled.div`
    height: 20px;
    display: flex;
    align-items: center;
    justify-content: center;
    background: ${p => (p.$active ? "#3a3a3a" : "transparent")};
    border-radius: 2px;
`;

const SpreadWrap = styled.div`
    position: absolute;
    left: 149px;
    top: 5px;
    width: 713px;
    height: 505px;
    box-sizing: border-box;
    background: #fff;
    border-right: 2px solid #000;
    border-bottom: 2px solid #000;
`;

const Spine = styled.div`
    position: absolute;
    left: 356px;
    top: 0;
    bottom: 0;
    width: 1px;
    background: #000;
`;

const MarginFrame = styled.div`
    position: absolute;
    left: ${p => p.$left}px;
    top: 22px;
    width: 313px;
    height: 461px;
    box-sizing: border-box;
    border: 1px solid #bb80d6;
`;

const CyanCircle = styled.div`
    position: absolute;
    left: 6px;
    top: 1px;
    width: 39px;
    height: 39px;
    border-radius: 50%;
    background: #12a5dc;
`;

const CyanRect = styled.div`
    position: absolute;
    left: 636px;
    top: 7px;
    width: 67px;
    height: 28px;
    background: #12a5dc;
`;

const BlueFrame = styled.div`
    position: absolute;
    left: 378px;
    top: 183px;
    width: 203px;
    height: 300px;
    box-sizing: border-box;
    border: 1px solid #8fb5c9;
    border-left-color: #bb80d6;
    border-bottom-color: #bb80d6;
`;

const TextFrame = styled.div`
    position: absolute;
    left: 131px;
    top: 183px;
    width: 203px;
    height: 302px;
    box-sizing: border-box;
    border-top: 1px solid #8fb5c9;
    font-family: "Liberation Serif", serif;
    font-size: 7.1px;
    letter-spacing: -0.15px;
    line-height: 8.6px;
    color: #fff;
    will-change: transform;
`;

const TextLine = styled.div`
    width: fit-content;
    min-width: ${p => p.$w}px;
    height: 8.6px;
    background: #000;
    white-space: nowrap;
    text-align: justify;
    text-align-last: justify;
`;

const PageNumber = styled.div`
    position: absolute;
    left: ${p => p.$left}px;
    top: 470px;
    width: ${p => p.$w}px;
    height: 12px;
    box-sizing: border-box;
    border: 1px dotted #d8d8d8;
    border-bottom: 0;
    text-align: ${p => (p.$center ? "center" : "left")};
    font-family: "Liberation Serif", serif;
    font-size: 10px;
    line-height: 10px;
    color: #000;
`;

const PointerArrow = styled.svg`
    position: absolute;
    left: 541px;
    top: 206px;
`;

const StatusRow = styled.div`
    height: 17px;
    display: flex;
    align-items: center;
    background: #535353;
    flex-shrink: 0;
`;

const NavIcon = styled.div`
    margin-left: ${p => p.$ml}px;
    font-size: 9px;
    color: #aaa;
    white-space: nowrap;
`;

const StatusField = styled.div`
    width: 83px;
    height: 15px;
    margin-left: 14px;
    box-sizing: border-box;
    display: flex;
    align-items: center;
    justify-content: space-between;
    padding: 0 2px 0 3px;
    background: #484848;
    border: 1px solid #424242;
    font-size: 10px;
    color: #ddd;
`;

const StatusText = styled.div`
    margin-left: ${p => p.$ml}px;
    font-size: 10px;
    color: #d0d0d0;
    white-space: nowrap;
`;

const GreenDot = styled.div`
    width: 9px;
    height: 9px;
    margin-left: 12px;
    border-radius: 50%;
    background: #3fb45a;
`;

const HTrack = styled.div`
    flex: 1;
    height: 14px;
    margin: 0 8px;
    display: flex;
    justify-content: center;
`;

const HThumb = styled.div`
    width: 355px;
    height: 100%;
    margin-right: 20px;
    background: #626262;
    border-radius: 7px;
`;

const DockColumn = styled.div`
    width: 38px;
    display: flex;
    flex-direction: column;
    background: #484848;
    flex-shrink: 0;
`;

const DockTop = styled.div`
    height: 11px;
    font-size: 7px;
    line-height: 11px;
    text-align: center;
    color: #aaa;
    flex-shrink: 0;
`;

const DockBox = styled.div`
    flex: 1;
    width: 36px;
    background: #535353;
`;

const DockSection = styled.div`
    height: ${p => p.$h}px;
    box-sizing: border-box;
    display: flex;
    flex-direction: column;
    align-items: center;
    justify-content: center;
    gap: ${p => (p.$double ? "14px" : "0")};
    padding-top: 7px;
    border-bottom: 1px solid #444;
    background: linear-gradient(#777, #777) center 3px / 14px 2px no-repeat;
`;

const DockLetter = styled.div`
    display: flex;
    font-size: ${p => (p.$small ? "15px" : "18px")};
    font-weight: bold;
    line-height: 1;
    color: #c6c6c6;
`;

const ThinBar = styled.span`
    width: 1px;
    margin-left: 2px;
    background: #c6c6c6;
`;

const DockStack = styled.div`
    display: flex;
    align-items: flex-end;
`;

const PanelColumn = styled.div`
    flex: 1;
    min-width: 0;
    display: flex;
    flex-direction: column;
    background: #484848;
`;

const CollapseStrip = styled.div`
    height: 11px;
    font-size: 7px;
    line-height: 11px;
    text-align: right;
    padding-right: 4px;
    color: #aaa;
    flex-shrink: 0;
`;

const PanelBox = styled.div`
    height: ${p => (p.$h ? `${p.$h}px` : "auto")};
    flex: ${p => (p.$grow ? 1 : "none")};
    min-height: 0;
    margin-top: ${p => p.$top || 0}px;
    display: flex;
    flex-direction: column;
    background: #535353;
`;

const PanelTabs = styled.div`
    height: 22px;
    display: flex;
    align-items: stretch;
    background: #434343;
    flex-shrink: 0;
`;

const PanelTab = styled.div`
    display: flex;
    align-items: center;
    padding: 0 11px 0 7px;
    font-size: 11px;
    font-weight: bold;
    color: ${p => (p.$active ? "#dcdcdc" : "#8f8f8f")};
    background: ${p => (p.$active ? "#535353" : "#484848")};
`;

const TabMenu = styled.div`
    margin-left: auto;
    padding-right: 1px;
    display: flex;
    align-items: center;
`;

const MasterList = styled.div`
    height: 100px;
    display: flex;
    overflow: hidden;
    border-bottom: 1px solid #606060;
    box-sizing: content-box;
    flex-shrink: 0;
`;

const MasterRows = styled.div`
    flex: 1;
    min-width: 0;
    margin-top: -10px;
`;

const MasterRow = styled.div`
    height: 27px;
    box-sizing: border-box;
    display: flex;
    align-items: center;
    justify-content: space-between;
    padding: 0 8px 0 3px;
    font-size: 9.5px;
    color: #d2d2d2;
`;

const ThumbPair = styled.div`
    display: flex;
    gap: 1px;
`;

const ThumbPage = styled.div`
    position: relative;
    width: 15px;
    height: 21px;
    background: ${p => (p.$hilite
        ? "linear-gradient(#fff 45%, #8fc1f0 45%)"
        : p.$blank ? "transparent" : "#fff")};
`;

const ThumbLetter = styled.span`
    position: absolute;
    left: 1px;
    top: -1px;
    font-size: 9px;
    font-weight: ${p => (p.$bold ? "bold" : "normal")};
    color: #000;
`;

const ThumbDots = styled.div`
    position: absolute;
    left: 7px;
    top: 9px;
    height: 11px;
    border-left: 1px dotted #888;
`;

const PageArea = styled.div`
    height: 174px;
    display: flex;
    overflow: hidden;
    flex-shrink: 0;
`;

const PageStrip = styled.div`
    flex: 1;
    min-width: 0;
    padding-top: 8px;
    display: flex;
    flex-direction: column;
    align-items: center;
`;

const SpreadRow = styled.div`
    position: relative;
    display: flex;
    height: 33px;
    flex-shrink: 0;

    &::before {
        content: "";
        position: absolute;
        left: 50%;
        top: -6px;
        bottom: -6px;
        width: 1px;
        background: #c4c4c4;
        z-index: 1;
    }
`;

const PageMarker = styled.div`
    position: absolute;
    left: calc(50% - 3px);
    top: -5px;
    border-left: 4px solid transparent;
    border-right: 4px solid transparent;
    border-top: 4px solid #c4c4c4;
`;

const PageSlot = styled.div`
    position: relative;
    width: 23.5px;
    height: 33px;
    overflow: hidden;
    background: ${p => (p.$empty ? "transparent" : "#fff")};
`;

const CornerLetter = styled.span`
    position: absolute;
    top: 0;
    ${p => (p.$right ? "right: 2px;" : "left: 1px;")}
    font-size: 9px;
    color: #222;
`;

const MiniText = styled.div`
    position: absolute;
    right: 1px;
    bottom: 0;
    width: 14px;
    height: 21px;
    background: repeating-linear-gradient(#333 0 2px, #777 2px 3px);
`;

const MiniFrame = styled.div`
    position: absolute;
    left: 0;
    bottom: 0;
    width: 14px;
    height: 21px;
    border: 1px solid #6a9ab8;
    border-bottom: 0;
`;

const PageLabel = styled.div`
    height: 27px;
    display: flex;
    align-items: center;
    justify-content: center;
    padding-left: ${p => p.$shift || 0}px;
    padding-bottom: 2px;
    box-sizing: border-box;
    font-size: 9.5px;
    font-weight: bold;
    color: #d6d6d6;
    flex-shrink: 0;
`;

const PageBadge = styled.div`
    width: 21px;
    height: 13px;
    line-height: 13px;
    text-align: center;
    background: #2e8ee0;
    color: #e8f3ff;
    font-size: 9px;
`;

const PanelScroll = styled.div`
    position: relative;
    width: 12px;
    flex-shrink: 0;
    background: #4e4e4e;
`;

const PanelThumb = styled.div`
    position: absolute;
    left: 1px;
    right: 0;
    top: ${p => p.$top}px;
    height: ${p => p.$h}px;
    background: #6a6a6a;
    border-radius: 4px;
`;

const PanelFooter = styled.div`
    height: 23px;
    box-sizing: border-box;
    display: flex;
    align-items: center;
    padding: 0 0 2px 5px;
    font-size: 9.5px;
    color: #d2d2d2;
    border-top: 1px solid #4a4a4a;
    flex-shrink: 0;
`;

const FooterIcons = styled.div`
    margin-left: 36px;
    display: flex;
    align-items: center;
    gap: 13px;
`;

const TintRow = styled.div`
    height: 29px;
    box-sizing: border-box;
    padding: 2px 0 0 7px;
    display: flex;
    align-items: center;
    position: relative;
    border-bottom: 1px solid #5e5e5e;
    flex-shrink: 0;
`;

const MiniFill = styled.div`
    width: 13px;
    height: 13px;
    background: #fff;
    display: flex;
    align-items: center;
    justify-content: center;
    position: relative;
    z-index: 1;
    margin-bottom: 3px;
`;

const MiniStroke = styled.div`
    position: absolute;
    left: 14px;
    top: 13px;
    width: 11px;
    height: 11px;
    overflow: hidden;
`;

const TintLabel = styled.div`
    margin-left: 21px;
    font-size: 10px;
    color: #d2d2d2;
`;

const TintInput = styled.div`
    width: 33px;
    height: 19px;
    margin-left: 5px;
    box-sizing: border-box;
    padding-left: 4px;
    line-height: 18px;
    background: #474747;
    font-size: 10px;
    color: #ddd;
`;

const TintArrow = styled.div`
    width: 16px;
    height: 19px;
    display: flex;
    align-items: center;
    justify-content: center;
    color: #bbb;
    background: #484848;
    border-left: 1px solid #3f3f3f;
`;

const TintPercent = styled.div`
    margin-left: 5px;
    font-size: 10px;
    color: #d2d2d2;
`;

const SwatchArea = styled.div`
    display: flex;
    height: 166px;
    flex-shrink: 0;
`;

const SwatchList = styled.div`
    flex: 1;
    min-width: 0;
`;

const SwatchRow = styled.div`
    height: 20.6px;
    box-sizing: border-box;
    display: flex;
    align-items: center;
    padding-left: 18px;
    padding-right: 12px;
    background: ${p => (p.$selected ? "#47698a" : "transparent")};
    border-bottom: 1px solid #5b5b5b;
`;

const SwatchColor = styled.div`
    position: relative;
    overflow: hidden;
    width: 12px;
    height: 12px;
    flex-shrink: 0;
    background: ${p => p.$color || "#fff"};
    outline: 1px solid #3d3d3d;
`;

const SwatchName = styled.div`
    margin-left: 7px;
    flex: 1;
    min-width: 0;
    font-size: 9.5px;
    font-weight: ${p => (p.$selected ? "bold" : "normal")};
    color: ${p => (p.$selected ? "#fff" : "#cfcfcf")};
    white-space: nowrap;
`;

const SwatchSlot = styled.div`
    width: 15px;
    height: 12px;
    flex-shrink: 0;
    display: flex;
    align-items: center;
    justify-content: center;
`;

const Checker = styled.div`
    width: 11px;
    height: 11px;
    background: repeating-conic-gradient(#888 0 25%, #ddd 0 50%) 0 0 / 2px 2px;
`;

const NoneChip = styled.div`
    position: relative;
    overflow: hidden;
    width: 12px;
    height: 12px;
`;

const CloudRow = styled.div`
    flex: 1;
    min-height: 0;
    display: flex;
    align-items: center;
    padding-left: 5px;
`;

const OtherPanelEdge = styled.div`
    margin-left: auto;
    width: 112px;
    height: 22px;
    align-self: flex-end;
    background: #454545;
    border-radius: 3px 0 0 0;
`;

const TaskRow = styled.div`
    height: 38px;
    display: flex;
    align-items: center;
    background: #2f2f2f;
    flex-shrink: 0;
`;

const StartButton = styled.div`
    width: 49.5px;
    display: flex;
    justify-content: center;
    flex-shrink: 0;
    padding-right: 4px;
    box-sizing: border-box;
`;

const TaskIcon = styled.div`
    position: relative;
    width: 39.6px;
    height: 38px;
    flex-shrink: 0;
    display: flex;
    align-items: center;
    justify-content: center;
    background: ${p => (p.$sticky ? "#a5622c" : p.$current ? "#5c5c5c" : "transparent")};

    &::after {
        content: "";
        display: ${p => (p.$running || p.$sticky || p.$current ? "block" : "none")};
        position: absolute;
        left: ${p => (p.$sticky || p.$current ? 0 : "4px")};
        right: ${p => (p.$sticky || p.$current ? 0 : "4px")};
        bottom: 0;
        height: 2px;
        background: ${p => (p.$sticky ? "#f07c16" : "#7ab8e8")};
    }
`;

const AdobeChip = styled.div`
    width: 22px;
    height: 22px;
    box-sizing: border-box;
    display: flex;
    align-items: center;
    justify-content: center;
    border: 2px solid ${p => p.$fg};
    background: ${p => p.$bg};
    color: ${p => p.$fg};
    font-size: 11px;
    font-weight: bold;
`;

const TrayChevron = styled.div`
    width: 28px;
    display: flex;
    justify-content: center;
    flex-shrink: 0;
`;

const TrayText = styled.div`
    width: ${p => p.$w}px;
    margin-left: ${p => p.$ml}px;
    display: flex;
    flex-direction: column;
    align-items: center;
    gap: 3px;
    font-size: 10.5px;
    color: #e8e8e8;
    white-space: nowrap;
    flex-shrink: 0;
`;

const NotifyButton = styled.div`
    position: relative;
    margin-left: 9px;
    width: 24px;
    height: 28px;
    padding-top: 3px;
    box-sizing: border-box;
`;

const NotifyCount = styled.div`
    position: absolute;
    right: 1px;
    bottom: 1px;
    width: 13px;
    height: 13px;
    box-sizing: border-box;
    border: 1px solid #ddd;
    border-radius: 50%;
    background: #2f2f2f;
    color: #fff;
    font-size: 9px;
    font-weight: bold;
    line-height: 11px;
    text-align: center;
`;
